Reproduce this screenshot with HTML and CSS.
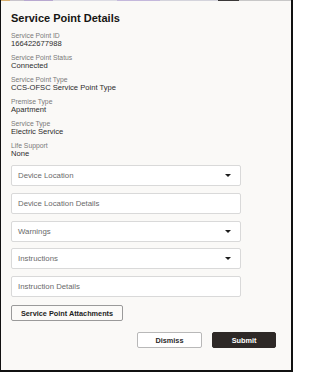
FILE: index.html
```html
<!DOCTYPE html>
<html>
<head>
<meta charset="utf-8">
<link rel="stylesheet" href="styles.css">
</head>
<body>
<div class="frame">
  <div class="strip"></div>
  <div class="panel">
    <h1 class="title">Service Point Details</h1>
    <div class="info">
      <div class="pair"><div class="label">Service Point ID</div><div class="value">166422677988</div></div>
      <div class="pair"><div class="label">Service Point Status</div><div class="value">Connected</div></div>
      <div class="pair"><div class="label">Service Point Type</div><div class="value">CCS-OFSC Service Point Type</div></div>
      <div class="pair"><div class="label">Premise Type</div><div class="value">Apartment</div></div>
      <div class="pair"><div class="label">Service Type</div><div class="value">Electric Service</div></div>
      <div class="pair"><div class="label">Life Support</div><div class="value">None</div></div>
    </div>
    <div class="fields">
      <div class="field select"><span class="ph">Device Location</span><span class="caret"></span></div>
      <div class="field"><span class="ph">Device Location Details</span></div>
      <div class="field select"><span class="ph">Warnings</span><span class="caret"></span></div>
      <div class="field select"><span class="ph">Instructions</span><span class="caret"></span></div>
      <div class="field"><span class="ph">Instruction Details</span></div>
    </div>
    <div class="attach-row"><button class="btn attach">Service Point Attachments</button></div>
    <div class="footer">
      <button class="btn dismiss">Dismiss</button>
      <button class="btn submit">Submit</button>
    </div>
  </div>
</div>
</body>
</html>
```
FILE: styles.css
```css
html, body {
  margin: 0;
  padding: 0;
  background: #ffffff;
  font-family: "Liberation Sans", Arial, sans-serif;
}
.frame {
  width: 290px;
  height: 370px;
  border-left: 1px solid #111;
  border-right: 2px solid #111;
  border-bottom: 2px solid #111;
  background: #faf9f7;
  display: flex;
  flex-direction: column;
}
.strip {
  height: 1px;
  background: linear-gradient(90deg, #d8b070 0 3%, #c8c4cc 3% 8%, #b8a8d0 8% 18%, #dcdce4 18% 40%, #c4b8dc 40% 55%, #d4d4dc 55% 75%, #3a3838 75% 82%, #c8c8c8 82% 100%);
}
.panel {
  padding: 10px 14px 0 10px;
  display: flex;
  flex-direction: column;
}
.title {
  margin: 0;
  font-size: 11px;
  line-height: 14px;
  font-weight: bold;
  color: #161513;
}
.info {
  margin-top: 7px;
  display: flex;
  flex-direction: column;
  gap: 6px;
}
.label {
  font-size: 6.8px;
  line-height: 8px;
  color: #7a7a7a;
}
.value {
  font-size: 7.6px;
  line-height: 8px;
  color: #2c2c2c;
}
.fields {
  margin-top: 7px;
  width: 230px;
  display: flex;
  flex-direction: column;
  gap: 6.75px;
}
.field {
  box-sizing: border-box;
  height: 21px;
  background: #ffffff;
  border: 1px solid #d9d9d9;
  border-radius: 2px;
  display: flex;
  align-items: center;
  justify-content: space-between;
  padding: 0 9px 0 6px;
}
.ph {
  font-size: 7.8px;
  color: #6a6a6a;
}
.caret {
  width: 0;
  height: 0;
  border-left: 3.5px solid transparent;
  border-right: 3.5px solid transparent;
  border-top: 3.5px solid #1c1c1c;
}
.attach-row {
  margin-top: 8px;
  display: flex;
}
.btn {
  box-sizing: border-box;
  height: 16px;
  font-family: "Liberation Sans", Arial, sans-serif;
  font-weight: bold;
  font-size: 7.3px;
  border-radius: 2px;
  padding: 0;
  cursor: pointer;
}
.attach {
  width: 112px;
  background: #fbfaf8;
  border: 1px solid #9a9a9a;
  color: #1e1e1e;
}
.footer {
  margin-top: 11px;
  display: flex;
  justify-content: flex-end;
  gap: 10px;
  padding-right: 1px;
}
.dismiss {
  width: 65px;
  background: #ffffff;
  border: 1px solid #b8b8b8;
  color: #2a2a2a;
}
.submit {
  width: 64px;
  background: #2e2927;
  border: 1px solid #2e2927;
  color: #ffffff;
}
```
